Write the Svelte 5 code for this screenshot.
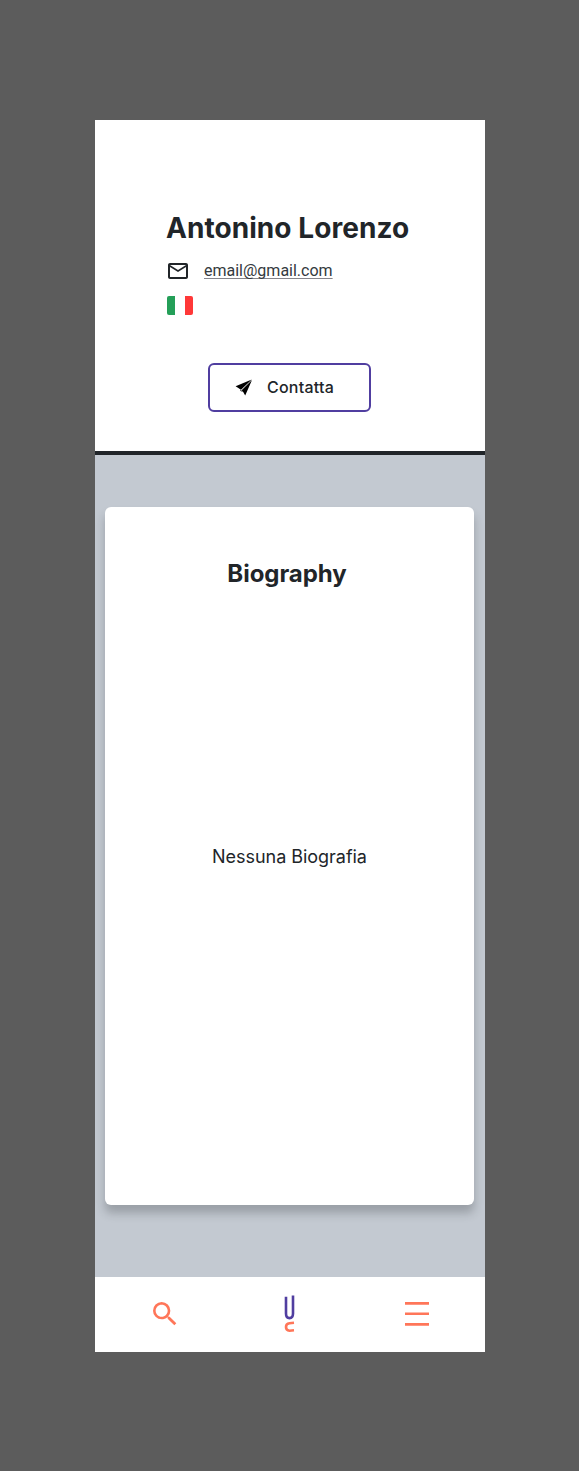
<script>
  const profile = {
    name: 'Antonino Lorenzo',
    email: 'email@gmail.com',
    biography: 'Nessuna Biografia'
  };
</script>

<div class="backdrop">
  <div class="phone">
    <header class="profile">
      <div class="details">
        <h1>{profile.name}</h1>
        <div class="email">
          <svg class="mail" width="24" height="24" viewBox="0 0 24 24" aria-hidden="true">
            <path d="M22 6c0-1.100-.9-2-2-2H4c-1.100 0-2 .9-2 2v12c0 1.100.9 2 2 2h16c1.100 0 2-.9 2-2V6zm-2 0-8 5-8-5h16zm0 12H4V8l8 5 8-5v10z" />
          </svg>
          <a href="mailto:{profile.email}">{profile.email}</a>
        </div>
        <div class="flag"><i></i><i></i><i></i></div>
      </div>
      <button class="contact">
        <svg width="18" height="18" viewBox="0 -1 18 18" aria-hidden="true">
          <path d="M16.800 .6 .6 7.200 6 10.700z" />
          <path d="M17 .9 10.200 16.500 8.200 12.900 6.700 11.200z" />
          <path d="M5.300 10.400 8.200 12.900 5.500 12.100z" />
        </svg>
        <span>Contatta</span>
      </button>
    </header>
    <main>
      <section class="card">
        <h2>Biography</h2>
        <p>{profile.biography}</p>
      </section>
    </main>
    <nav>
      <svg class="search" width="32" height="32" viewBox="0 0 24 24" aria-hidden="true">
        <path d="M15.500 14h-.79l-.28-.27A6.471 6.471 0 0 0 16 9.500 6.500 6.500 0 1 0 9.500 16c1.610 0 3.090-.59 4.230-1.570l.27.28v.79l5 4.990L20.490 19l-4.990-5zm-6 0C7.010 14 5 11.990 5 9.500S7.010 5 9.500 5 14 7.010 14 9.500 11.990 14 9.500 14z" />
      </svg>
      <svg class="logo" width="12" height="38" viewBox="0 0 12 38" aria-hidden="true">
        <path class="clip" d="M3 1.700V18.500q0 4.600 3.500 4.600T10 18.500V.5" />
        <path class="hook" d="M11 27.800 6.500 28.200Q3 28.600 3 32T6.500 35.700L11 35.300" />
      </svg>
      <svg class="menu" width="24" height="26" viewBox="0 0 24 26" aria-hidden="true">
        <path d="M0 1h24v2.700H0zM0 11.400h24V14H0zM0 22h24v2.700H0z" />
      </svg>
    </nav>
  </div>
</div>

<style>
  .backdrop {
    box-sizing: border-box;
    height: 1471px;
    padding: 120px 94px 119px 95px;
    background: #5c5c5c;
    color: #212529;
    font-family: Inter, sans-serif;
  }
  .phone {
    display: flex;
    flex-direction: column;
    height: 1232px;
    background: #fff;
    overflow: hidden;
  }
  .profile {
    box-sizing: border-box;
    height: 335px;
    padding-top: 91px;
    border-bottom: 4px solid #212529;
  }
  .details {
    padding-left: 71px;
  }
  h1 {
    margin: 0;
    font-size: 28px;
    line-height: 34px;
    font-weight: 700;
    letter-spacing: 0.06px;
    white-space: nowrap;
  }
  .email {
    display: flex;
    align-items: center;
    height: 24px;
    margin-top: 14px;
    gap: 14px;
  }
  .mail {
    fill: #212529;
  }
  a {
    color: #343a40;
    font-family: Roboto, sans-serif;
    font-size: 16px;
    line-height: 24px;
    text-decoration-color: #85858b;
    text-decoration-thickness: 1px;
    text-underline-offset: 2px;
    text-decoration-skip-ink: none;
  }
  .flag {
    display: grid;
    grid-template-columns: 8px 10px 8px;
    width: 26px;
    height: 19px;
    margin: 13px 0 0 1px;
    border-radius: 2px;
    overflow: hidden;
  }
  .flag i:first-child {
    background: #249f58;
  }
  .flag i:last-child {
    background: #ff3838;
  }
  .contact {
    box-sizing: border-box;
    display: flex;
    align-items: center;
    width: 163px;
    height: 49px;
    margin: 48px 0 0 113px;
    padding: 0 0 1px 25px;
    gap: 14px;
    border: 2px solid #503ea0;
    border-radius: 6px;
    background: #fff;
    color: #212529;
    font: 500 16px/24px Inter, sans-serif;
    letter-spacing: 0.22px;
  }
  main {
    box-sizing: border-box;
    height: 822px;
    padding: 52px 11px 0 10px;
    background: #c3c9d1;
    overflow: hidden;
  }
  .card {
    display: flex;
    flex-direction: column;
    align-items: center;
    height: 698px;
    border-radius: 6px;
    background: #fff;
    box-shadow: 0 8px 10px rgba(33, 37, 41, 0.26);
  }
  h2 {
    margin: 52px 5px 0 0;
    font-size: 24px;
    line-height: 30px;
    font-weight: 700;
    letter-spacing: -0.05px;
  }
  p {
    margin: 255px 0 0;
    font-size: 18px;
    line-height: 26px;
    letter-spacing: -0.04px;
  }
  nav {
    box-sizing: border-box;
    display: flex;
    height: 75px;
    padding-bottom: 2px;
    align-items: center;
  }
  .search {
    margin-left: 54px;
    fill: #ff7659;
  }
  .logo {
    margin-left: 102px;
    fill: none;
    stroke-width: 2.600;
  }
  .clip {
    stroke: #503ea0;
  }
  .hook {
    stroke: #ff7659;
  }
  .menu {
    margin-left: 110px;
    fill: #ff7659;
  }
</style>
